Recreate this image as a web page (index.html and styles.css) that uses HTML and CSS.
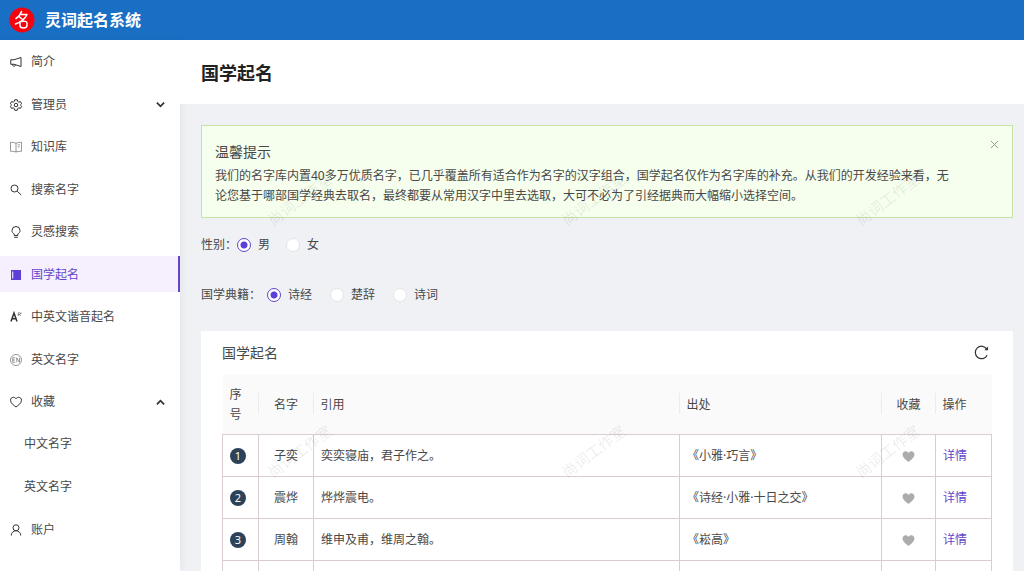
FILE: index.html
```html
<!DOCTYPE html>
<html lang="zh-CN">
<head>
<meta charset="utf-8">
<meta name="viewport" content="width=device-width, initial-scale=1">
<title>灵词起名系统</title>
<link rel="stylesheet" href="styles.css">
</head>
<body>
<svg class="sprite" aria-hidden="true">
  <symbol id="heart" viewBox="0 0 24 24"><path d="M12 22C8 19 1 14.500 1 8.500 1 5 3.500 2.500 6.700 2.500c2.200 0 4.200 1.100 5.300 3 1.100-1.900 3.100-3 5.300-3C20.500 2.500 23 5 23 8.500 23 14.500 16 19 12 22z"/></symbol>
</svg>
<div class="app">
  <header class="topbar">
    <svg class="logo" viewBox="0 0 26 26" aria-hidden="true"><circle cx="13" cy="13" r="12.500" fill="#f5040d"/><path d="M12.500 4.500C11.500 7.500 9.500 10 7 11.500M11.500 7.500h6.500C16 12 12 15 6.500 17M10 9.500l3.500 3M11 14.500q7-1 7 1.500v2q0 3-3.500 3T11 18.500z" fill="none" stroke="#fff" stroke-width="1.500" stroke-linecap="round" stroke-linejoin="round"/></svg>
    <span class="brand">灵词起名系统</span>
  </header>
  <div class="body">
    <nav class="sidebar">
      <ul class="menu">
        <li><a class="item" href="#"><svg class="icon" viewBox="0 0 24 24"><path d="M22 3v18L8 16.500H1.500v-9H8zM4.500 16.500c0 5 6.500 5 6.500 1"/></svg>简介</a></li>
        <li><a class="item" href="#"><svg class="icon" viewBox="0 0 24 24"><path d="M9.500 1.500h5l.8 3.400 2.200 1.300 3.400-1 2.400 4.300-2.500 2.400v.2l2.500 2.400-2.400 4.300-3.400-1-2.200 1.300-.8 3.400h-5l-.8-3.400-2.200-1.300-3.400 1L.7 14.500l2.500-2.400v-.2L.7 9.500l2.400-4.300 3.400 1 2.200-1.300z"/><circle cx="12" cy="12" r="3.500"/></svg>管理员<svg class="arrow" viewBox="0 0 10 10"><path d="M1 3l4 4 4-4"/></svg></a></li>
        <li><a class="item" href="#"><svg class="icon thin" viewBox="0 0 24 24"><path d="M12 4.500C9 3 5 2.500 1 2.500v18c4 0 8 .3 11 1.500 3-1.200 7-1.500 11-1.500v-18c-4 0-8 .5-11 2zM12 4.500V22M15.500 8l4-.7M15.500 12l4-.7"/></svg>知识库</a></li>
        <li><a class="item" href="#"><svg class="icon" viewBox="0 0 24 24"><circle cx="9" cy="9" r="7"/><path d="M14.500 14.500l8 7.500"/></svg>搜索名字</a></li>
        <li><a class="item" href="#"><svg class="icon" viewBox="0 0 24 24"><path d="M8.500 19v-3C5.500 14.500 4 12 4 9a8 8 0 0 1 16 0c0 3-1.500 5.500-4.500 7v3zM8.500 22.500h7"/></svg>灵感搜索</a></li>
        <li><a class="item active" href="#" aria-current="page"><svg class="icon book" viewBox="0 0 24 24"><path d="M2 2h20v20H2z"/><path class="spine" d="M4.500 5h2v14h-2z"/></svg>国学起名</a></li>
        <li><a class="item" href="#"><svg class="icon" viewBox="0 0 24 24"><path class="bold" d="M2 21L8 4l6 17M4.500 15.500h7"/><path class="fine" d="M16.500 10V3.500h2.500a1.800 1.800 0 0 1 0 3.600h-2.500M19 7l2.500 3M22 3v3"/></svg>中英文谐音起名</a></li>
        <li><a class="item" href="#"><svg class="icon thin" viewBox="0 0 24 24"><circle cx="12" cy="12" r="11"/><path d="M10.500 7.500h-5v9h5M5.500 12h4.500M13.500 16.500v-9l5.500 9v-9"/></svg>英文名字</a></li>
        <li>
          <a class="item" href="#"><svg class="icon" viewBox="0 0 24 24"><use href="#heart"/></svg>收藏<svg class="arrow" viewBox="0 0 10 10"><path d="M1 7l4-4 4 4"/></svg></a>
          <ul class="submenu">
            <li><a class="item" href="#">中文名字</a></li>
            <li><a class="item" href="#">英文名字</a></li>
          </ul>
        </li>
        <li><a class="item" href="#"><svg class="icon" viewBox="0 0 24 24"><circle cx="12" cy="7.500" r="6"/><path d="M2.500 23c0-5.500 4-9.500 9.500-9.500s9.500 4 9.500 9.500"/></svg>账户</a></li>
      </ul>
    </nav>
    <main class="main">
      <div class="page-head"><h1>国学起名</h1></div>
      <div class="content">
        <section class="notice">
          <h2>温馨提示</h2>
          <p>我们的名字库内置40多万优质名字，已几乎覆盖所有适合作为名字的汉字组合，国学起名仅作为名字库的补充。从我们的开发经验来看，无论您基于哪部国学经典去取名，最终都要从常用汉字中里去选取，大可不必为了引经据典而大幅缩小选择空间。</p>
          <button class="close" type="button" aria-label="关闭"><svg viewBox="0 0 10 10"><path d="M1 1l8 8M9 1l-8 8"/></svg></button>
        </section>
        <div class="field" role="radiogroup" aria-labelledby="sex-label">
          <span id="sex-label">性别：</span>
          <label><input type="radio" name="sex" checked>男</label>
          <label><input type="radio" name="sex">女</label>
        </div>
        <div class="field books" role="radiogroup" aria-labelledby="book-label">
          <span id="book-label">国学典籍：</span>
          <label><input type="radio" name="book" checked>诗经</label>
          <label><input type="radio" name="book">楚辞</label>
          <label><input type="radio" name="book">诗词</label>
        </div>
        <section class="card">
          <div class="card-head">
            <h2>国学起名</h2>
            <button class="reload" type="button" aria-label="刷新"><svg viewBox="0 0 24 24"><path d="M21 16.500A10 10 0 1 1 20.500 6.500"/><path class="tip" d="M22.500 2.500v6h-6z"/></svg></button>
          </div>
          <table>
            <colgroup><col class="c-no"><col class="c-name"><col><col class="c-source"><col class="c-fav"><col class="c-action"></colgroup>
            <thead><tr><th>序号</th><th class="mid">名字</th><th>引用</th><th>出处</th><th class="mid">收藏</th><th>操作</th></tr></thead>
            <tbody>
              <tr><td><span class="num">1</span></td><td class="mid">子奕</td><td>奕奕寝庙，君子作之。</td><td>《小雅·巧言》</td><td class="mid"><button class="fav" type="button" aria-label="收藏"><svg viewBox="0 0 24 24"><use href="#heart"/></svg></button></td><td><a href="#">详情</a></td></tr>
              <tr><td><span class="num">2</span></td><td class="mid">震烨</td><td>烨烨震电。</td><td>《诗经·小雅·十日之交》</td><td class="mid"><button class="fav" type="button" aria-label="收藏"><svg viewBox="0 0 24 24"><use href="#heart"/></svg></button></td><td><a href="#">详情</a></td></tr>
              <tr><td><span class="num">3</span></td><td class="mid">周翰</td><td>维申及甫，维周之翰。</td><td>《崧高》</td><td class="mid"><button class="fav" type="button" aria-label="收藏"><svg viewBox="0 0 24 24"><use href="#heart"/></svg></button></td><td><a href="#">详情</a></td></tr>
              <tr><td></td><td></td><td></td><td></td><td></td><td></td></tr>
            </tbody>
          </table>
        </section>
      </div>
      <svg class="watermark" aria-hidden="true">
        <g text-anchor="middle">
          <text transform="translate(123 164) rotate(-37)">尚词工作室</text>
          <text transform="translate(417 164) rotate(-37)">尚词工作室</text>
          <text transform="translate(711 164) rotate(-37)">尚词工作室</text>
          <text transform="translate(123 416) rotate(-37)">尚词工作室</text>
          <text transform="translate(417 416) rotate(-37)">尚词工作室</text>
          <text transform="translate(711 416) rotate(-37)">尚词工作室</text>
        </g>
      </svg>
    </main>
  </div>
</div>
</body>
</html>
```
FILE: styles.css
```css
* { box-sizing: border-box; }
body {
  margin: 0;
  font: 12px/20px "Noto Sans", "Noto Sans CJK SC", sans-serif;
  color: #484848;
  background: #eff1f5;
}
h1, h2, p, ul { margin: 0; padding: 0; }
ul { list-style: none; }
a { color: #6146c9; text-decoration: none; }
button { padding: 0; border: 0; background: none; }
svg { display: block; }
.sprite { position: absolute; width: 0; height: 0; }

.app { display: flex; flex-direction: column; height: 100vh; overflow: hidden; }
.topbar {
  display: flex;
  align-items: center;
  gap: 10px;
  flex: none;
  height: 40px;
  padding: 0 9px;
  background: #186fc4;
  color: #fff;
}
.logo { width: 26px; height: 26px; }
.brand { font-size: 16px; font-weight: 700; }
.body { display: flex; flex: 1; min-height: 0; }

.sidebar {
  flex: none;
  width: 180px;
  padding-top: 4px;
  background: #fff;
  box-shadow: 2px 0 8px rgba(29, 35, 41, 0.05);
}
.menu, .submenu { display: flex; flex-direction: column; gap: 7px; }
.submenu { margin-top: 7px; }
.item {
  display: flex;
  align-items: center;
  gap: 9px;
  height: 35px;
  padding: 1px 15px 0 10px;
  color: #484848;
}
.menu li:nth-child(even) > .item { height: 36px; }
.submenu .item { padding-left: 24px; }
.menu .active { color: #6146c9; background: #f5effe; border-right: 2px solid #6146c9; }
.icon { width: 12px; height: 12px; overflow: visible; fill: none; stroke: #333; stroke-width: 2; }
.icon.thin { stroke-width: 1; }
.icon .bold { stroke-width: 3; }
.icon .fine { stroke-width: 1; }
.icon.book { fill: #5b3fd6; stroke: none; }
.icon .spine { fill: #fff; }
.arrow { width: 9px; height: 9px; margin-left: auto; fill: none; stroke: #333; stroke-width: 2; }

.main { position: relative; flex: 1; min-width: 0; overflow: hidden; }
.page-head { padding: 21px 21px 19px; background: #fff; }
.page-head h1 { font-size: 18px; line-height: 24px; font-weight: 700; color: #222; }
.content { padding: 21px 11px 0 21px; }
.notice {
  position: relative;
  padding: 15px 58px 11px 13px;
  background: #f6ffed;
  border: 1px solid #c4e3a4;
}
.notice h2, .card h2 { font-size: 14px; line-height: 22px; font-weight: 400; }
.notice h2 { margin-bottom: 3px; }
.close { position: absolute; top: 14px; right: 13px; }
.close svg { width: 9px; height: 9px; fill: none; stroke: #8b9285; stroke-width: 1; }

.field { display: flex; align-items: center; height: 50px; padding-top: 4px; }
.books span { margin-right: 6px; }
.field label { display: flex; align-items: center; gap: 7px; margin-right: 16px; }
.books label { margin-right: 18px; }
.field input {
  appearance: none;
  width: 14px;
  height: 14px;
  margin: 0;
  border: 1px solid #e4e5e9;
  border-radius: 50%;
  background: #fff;
}
.field input:checked {
  border-color: #6146c9;
  background: radial-gradient(circle, #5b3fd6 3px, #fff 4px);
}

.card { margin-top: 13px; padding: 0 21px; background: #fff; }
.card-head { display: flex; align-items: center; justify-content: space-between; height: 43px; padding-right: 3px; }
.reload svg { width: 15px; height: 15px; fill: none; stroke: #333; stroke-width: 2; }
.reload .tip { fill: #333; stroke: none; }

table { width: 100%; table-layout: fixed; border-collapse: collapse; }
.c-no { width: 36px; }
.c-name { width: 55px; }
.c-source { width: 202px; }
.c-fav { width: 54px; }
.c-action { width: 56px; }
th, td { padding: 2px 7px 0; text-align: left; font-weight: 400; }
th { height: 60px; background: linear-gradient(#ececec, #ececec) right center / 1px 21px no-repeat #fafafa; }
th:first-child { padding-right: 14px; }
th:last-child { background: #fafafa; }
td { height: 42px; border: 1px solid #d9cdd0; }
.mid { text-align: center; }
.num {
  display: block;
  width: 16px;
  height: 16px;
  border-radius: 50%;
  background: #2c4258;
  color: #fff;
  font-size: 11px;
  line-height: 16px;
  text-align: center;
}
.fav { display: block; margin: 0 auto; }
.fav svg { width: 13px; height: 13px; fill: #acacac; }

.watermark { position: absolute; inset: 0; width: 100%; height: 100%; pointer-events: none; }
.watermark text { font-size: 15px; fill: rgba(0, 0, 0, 0.09); }
```
